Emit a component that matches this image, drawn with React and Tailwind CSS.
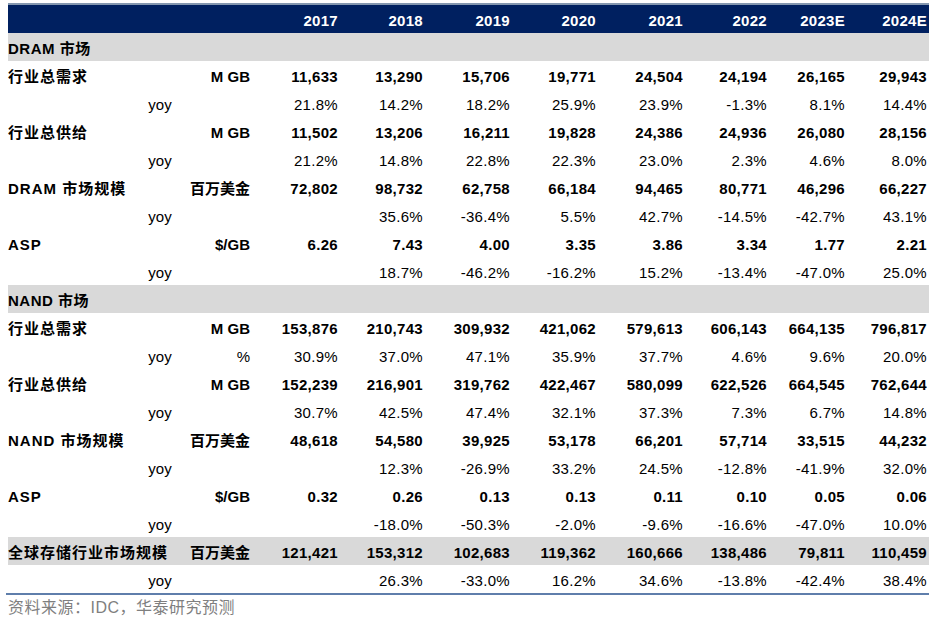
import React from "react";

const cols = ["2017", "2018", "2019", "2020", "2021", "2022", "2023E", "2024E"];
const widths = ["w-[88px]", "w-[85px]", "w-[87px]", "w-[86px]", "w-[87px]", "w-[84px]", "w-[78px]", "w-[82px]"];

const rows = [
  { type: "section", label: "DRAM 市场" },
  { type: "main", label: "行业总需求", unit: "M GB", v: ["11,633", "13,290", "15,706", "19,771", "24,504", "24,194", "26,165", "29,943"] },
  { type: "yoy", v: ["21.8%", "14.2%", "18.2%", "25.9%", "23.9%", "-1.3%", "8.1%", "14.4%"] },
  { type: "main", label: "行业总供给", unit: "M GB", v: ["11,502", "13,206", "16,211", "19,828", "24,386", "24,936", "26,080", "28,156"] },
  { type: "yoy", v: ["21.2%", "14.8%", "22.8%", "22.3%", "23.0%", "2.3%", "4.6%", "8.0%"] },
  { type: "main", label: "DRAM 市场规模", unit: "百万美金", v: ["72,802", "98,732", "62,758", "66,184", "94,465", "80,771", "46,296", "66,227"] },
  { type: "yoy", v: ["", "35.6%", "-36.4%", "5.5%", "42.7%", "-14.5%", "-42.7%", "43.1%"] },
  { type: "main", label: "ASP", unit: "$/GB", v: ["6.26", "7.43", "4.00", "3.35", "3.86", "3.34", "1.77", "2.21"] },
  { type: "yoy", v: ["", "18.7%", "-46.2%", "-16.2%", "15.2%", "-13.4%", "-47.0%", "25.0%"] },
  { type: "section", label: "NAND 市场" },
  { type: "main", label: "行业总需求", unit: "M GB", v: ["153,876", "210,743", "309,932", "421,062", "579,613", "606,143", "664,135", "796,817"] },
  { type: "yoy", unit: "%", v: ["30.9%", "37.0%", "47.1%", "35.9%", "37.7%", "4.6%", "9.6%", "20.0%"] },
  { type: "main", label: "行业总供给", unit: "M GB", v: ["152,239", "216,901", "319,762", "422,467", "580,099", "622,526", "664,545", "762,644"] },
  { type: "yoy", v: ["30.7%", "42.5%", "47.4%", "32.1%", "37.3%", "7.3%", "6.7%", "14.8%"] },
  { type: "main", label: "NAND 市场规模", unit: "百万美金", v: ["48,618", "54,580", "39,925", "53,178", "66,201", "57,714", "33,515", "44,232"] },
  { type: "yoy", v: ["", "12.3%", "-26.9%", "33.2%", "24.5%", "-12.8%", "-41.9%", "32.0%"] },
  { type: "main", label: "ASP", unit: "$/GB", v: ["0.32", "0.26", "0.13", "0.13", "0.11", "0.10", "0.05", "0.06"] },
  { type: "yoy", v: ["", "-18.0%", "-50.3%", "-2.0%", "-9.6%", "-16.6%", "-47.0%", "10.0%"] },
  { type: "main", grey: true, label: "全球存储行业市场规模", unit: "百万美金", v: ["121,421", "153,312", "102,683", "119,362", "160,666", "138,486", "79,811", "110,459"] },
  { type: "yoy", v: ["", "26.3%", "-33.0%", "16.2%", "34.6%", "-13.8%", "-42.4%", "38.4%"] },
];

function Row({ r }) {
  if (r.type === "section") {
    return (
      <div className="flex h-[28px] items-center bg-[#d9d9d9] pt-[2px] font-bold text-black">
        <div className="whitespace-nowrap tracking-[0.5px]">{r.label}</div>
      </div>
    );
  }
  const bold = r.type === "main";
  return (
    <div className={`flex h-[28px] items-center pt-[2px] text-black ${r.grey ? "bg-[#d9d9d9]" : ""}`}>
      <div className="w-[122px] whitespace-nowrap font-bold tracking-[1px]">{r.label || ""}</div>
      <div className="w-[60px] text-center">{r.type === "yoy" ? "yoy" : ""}</div>
      <div className={`w-[62px] whitespace-nowrap pr-[2px] text-right ${bold ? "font-bold" : ""}`}>{r.unit || ""}</div>
      {r.v.map((x, i) => (
        <div key={i} className={`${widths[i]} pr-[2px] text-right tracking-[0.3px] ${bold ? "font-bold" : ""}`}>{x}</div>
      ))}
    </div>
  );
}

export default function App() {
  return (
    <div className="w-[937px] h-[622px] bg-white pt-[3px] text-[15px] leading-none" style={{ fontFamily: '"Liberation Sans", Arial, "Noto Sans CJK SC", sans-serif' }}>
      <div className="ml-[8px] w-[921px]">
        <div className="h-[2px] bg-[#8497b0]" />
        <div className="flex h-[28px] items-center bg-[#002060] pt-[2px] font-bold text-white">
          <div className="w-[244px]" />
          {cols.map((c, i) => (
            <div key={c} className={`${widths[i]} pr-[2px] text-right tracking-[0.3px]`}>{c}</div>
          ))}
        </div>
        {rows.map((r, i) => (
          <Row key={i} r={r} />
        ))}
      </div>
      <div className="ml-[6px] h-[2px] w-[923px] bg-[#5f7eab]" />
      <div className="ml-[8px] mt-[5px] text-[16px] text-[#7f7f7f] tracking-[0.5px]">资料来源：IDC，华泰研究预测</div>
    </div>
  );
}
